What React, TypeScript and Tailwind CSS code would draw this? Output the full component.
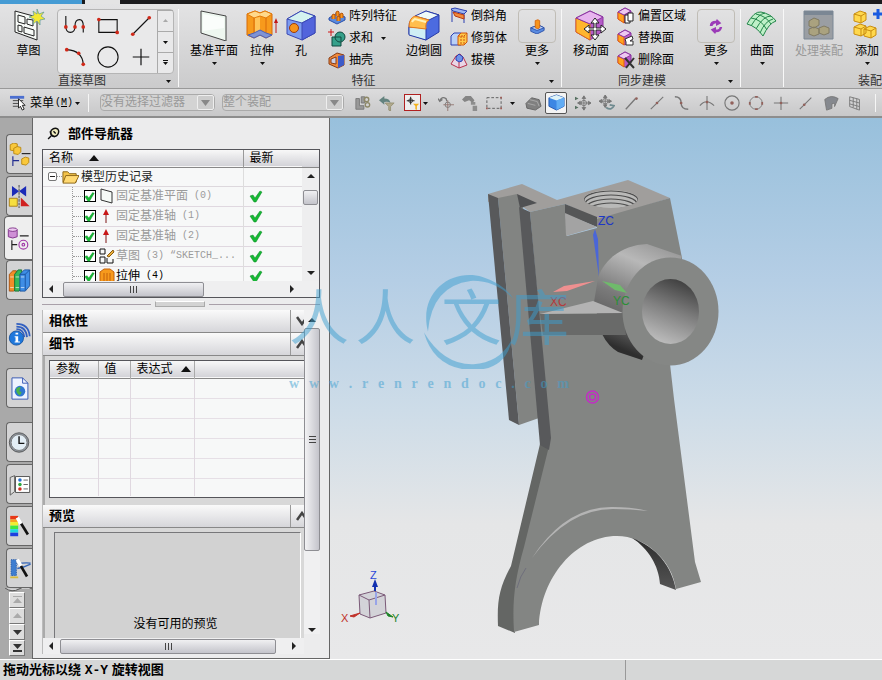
import React, { useState } from 'react'

const CJK = "font-['Liberation_Sans','Noto_Sans_CJK_SC',sans-serif]"

type IconProps = { size?: number; box?: string; className?: string; children: React.ReactNode }

const Icon = ({ size = 18, box = '0 0 18 18', className = '', children }: IconProps) => (
  <svg width={size} height={size} viewBox={box} fill="none" className={'shrink-0 ' + className} aria-hidden="true">
    {children}
  </svg>
)

const Down = ({ bar = false, dim = false }: { bar?: boolean; dim?: boolean }) => (
  <svg width="7" height="6" viewBox="0 0 7 6" className="shrink-0" aria-hidden="true">
    {bar && <path d="M1 0h5v1H1z" fill="#111" />}
    <path d="M1 2h5L3.500 5z" fill={dim ? '#aaa' : '#111'} />
  </svg>
)

/* ---------- big ribbon icons, 32 x 32 ---------- */

const SketchIcon = () => (
  <Icon size={32} box="0 0 32 32">
    <path d="M2 2l22 6v23L2 23z" fill="#f7faf7" stroke="#222" />
    <path d="M5 6l7 2v7l-7-2zM14 10l6 1v6l-6-2zM5 16l4 1v6l-4-1zM11 18l10 3v6l-10-3z" stroke="#222" />
    <path d="M24 0l2 5 5-2-3 4 4 3-5 1v5l-3-4-4 3 1-5-5-2 5-2-1-4 4 3z" fill="#f4e934" stroke="#5a9a9a" strokeWidth=".7" />
  </Icon>
)

const PlaneIcon = () => (
  <Icon size={32} box="0 0 32 32">
    <path d="M3 2l25 5v25L3 24z" fill="#eef7f0" stroke="#444" />
    <path d="M5 5l21 4v10L5 22z" fill="#fff" opacity=".7" />
  </Icon>
)

const ExtrudeIcon = () => (
  <Icon size={32} box="0 0 32 32">
    <path d="M1 5l8-3 5 2 5-2 7 3v21l-6 3-6-3-6 3-7-3z" fill="#f79a1c" stroke="#d76a08" />
    <path d="M1 5l7 4 6-2 6 2 6-4-7-3-5 2-5-2z" fill="#ffd98c" stroke="#e27b0c" />
    <path d="M8 9v16M20 9v16" stroke="#d86b0a" />
    <path d="M9 9v15l5-3V8z" fill="#ffc45a" />
    <path d="M2 26l6-2 6-3 6 3 6 2-6 3-6-3-6 3z" fill="#7f93d4" stroke="#4c60b8" />
    <path d="M30 24V13" stroke="#c01818" />
    <path d="M28 14l2-5 2 5z" fill="#c01818" />
  </Icon>
)

const HoleIcon = () => (
  <Icon size={32} box="0 0 32 32">
    <path d="M2 10L16 2l14 5v17l-13 7L2 25z" fill="#7d9cf0" stroke="#3b48b4" />
    <path d="M2 10L16 2l14 5-13 7z" fill="#d4f2f0" stroke="#3b48b4" />
    <path d="M17 14l13-7v17l-13 7z" fill="#5264dc" stroke="#3b48b4" />
    <circle cx="9" cy="19" r="4.500" fill="#f7941c" stroke="#9b3c10" />
  </Icon>
)

const BlendIcon = () => (
  <Icon size={32} box="0 0 32 32">
    <path d="M1 18q0-8 6-10l11-6 13 4v17l-13 8-17-6z" fill="#4c6be0" stroke="#263aa8" />
    <path d="M1 18l17 1v12L1 26z" fill="#cfeef5" stroke="#263aa8" />
    <path d="M7 7l11-5 13 4-10 5z" fill="#eefaf8" stroke="#263aa8" />
    <path d="M1 18q0-9 6-11l14 4q-4 2-3 9z" fill="#ffbe4d" stroke="#e77817" />
    <path d="M4 13q1-2 3-3l11 3" stroke="#fff1b8" strokeWidth="2" />
  </Icon>
)

const MoveFaceIcon = () => (
  <Icon size={32} box="0 0 32 32">
    <path d="M1 9l14-7 13 6v14l-13 9-14-8z" fill="#b55bc8" stroke="#8a33a0" />
    <path d="M1 9l14 6v16L1 23z" fill="#ffb52e" stroke="#e46a10" />
    <path d="M1 9l14-7 13 6-13 7z" fill="#e7b4ee" stroke="#8a33a0" />
    <path d="M20 9l4 5h-3v5h5v-3l5 4-5 4v-3h-5v5h3l-4 5-4-5h3v-5h-5v3l-5-4 5-4v3h5v-5h-3z" fill="#fff" stroke="#222" />
  </Icon>
)

const SurfaceIcon = () => (
  <Icon size={32} box="0 0 32 32">
    <path d="M1 15Q8 2 15 3q10 2 15 9-7 2-13 15Q10 17 1 15z" fill="#bff0c8" stroke="#23854a" />
    <path d="M5 9q10 1 16 12M10 5q10 2 15 10M5 17Q12 5 19 4M10 20Q17 7 25 7M14 24q5-12 13-14" stroke="#23854a" />
  </Icon>
)

const AsmProcessIcon = () => (
  <Icon size={32} box="0 0 32 32">
    <path d="M1 2h29v28H1z" fill="#9a9ea3" stroke="#7b8794" />
    <path d="M1 2h29v4H1z" fill="#7b8794" />
    <path d="M6 12l5-3 5 2v5l-5 3-5-2zM6 20l5-2 5 2v5l-5 2-5-2zM16 19l5-2 5 2v5l-5 2-5-2z" fill="#aaa27f" stroke="#807a63" />
  </Icon>
)

const AddIcon = () => (
  <Icon size={32} box="0 0 32 32">
    <path d="M3 5l6-3 6 2v7l-5 3-7-2zM3 18l6-3 6 2v7l-5 3-7-2zM13 20l6-3 6 2v7l-5 3-7-2z" fill="#ffd84d" stroke="#c98d10" />
    <path d="M3 5l7 2 5-3M10 7v7M3 18l7 2 5-3M10 20v7M13 20l7 2 5-3M20 22v7" stroke="#c98d10" />
    <path d="M27 0v10M22 5h10" stroke="#1a5be0" strokeWidth="3" />
  </Icon>
)

/* ---------- small ribbon icons ---------- */

const PatternIcon = () => (
  <Icon>
    <path d="M1 11l8-5 8 4v3l-8 4-8-4z" fill="#5a8be0" stroke="#2b4fa8" />
    <path d="M4 12V8l2-1 1 1v4M8 9V5l2-1 1 1v5M9 14v-4l2-1 1 1v4M12 11V7l2-1 1 1v4" fill="#f7941c" stroke="#b8560a" />
  </Icon>
)
const UniteIcon = () => (
  <Icon>
    <path d="M3 0v7M0 3h6" stroke="#d01818" />
    <path d="M4 8h9v9H4z" fill="#35a08a" stroke="#114a40" />
    <circle cx="12" cy="8" r="5" fill="#35a08a" stroke="#114a40" />
    <path d="M7 8h6v4" stroke="#114a40" />
  </Icon>
)
const ShellIcon = () => (
  <Icon>
    <path d="M1 7l8-5 7 2v10l-6 3-9-4z" fill="#f08a3c" stroke="#8a3c14" />
    <path d="M10 5l6-1v10l-6 3z" fill="#3d5bc8" />
    <path d="M3 8l5-2v7l-5-1z" fill="#c9cfe8" stroke="#8a3c14" />
  </Icon>
)
const ChamferIcon = () => (
  <Icon>
    <path d="M2 2v13M2 3l12 3v10" stroke="#2b3fb0" />
    <path d="M1 2l4-1 12 3-3 3-11-3z" fill="#9db5f0" stroke="#2b3fb0" />
    <path d="M3 5l11 3v4L5 9z" fill="#f28a3a" stroke="#b83b14" />
  </Icon>
)
const TrimIcon = () => (
  <Icon>
    <path d="M1 7l3-3h7v12H1z" fill="#b9d0f6" stroke="#2b3fb0" />
    <path d="M8 7l3-3h6v9l-3 3H8z" fill="#ffc948" stroke="#d0560c" />
    <path d="M8 7h6l3-3M14 7v9M11 7v9" stroke="#d0560c" strokeDasharray="2 1" />
  </Icon>
)
const DraftIcon = () => (
  <Icon>
    <path d="M1 13L6 5l4-2 3 3 4 8-8 3z" fill="#e9d6e6" stroke="#b8304c" />
    <path d="M6 6l3-3 4 3-1 4-3 1-3-2z" fill="#6f93e8" stroke="#2b3fb0" />
    <path d="M9 11v6" stroke="#b8304c" />
  </Icon>
)
const FaceCube = ({ children }: { children: React.ReactNode }) => (
  <Icon>
    <path d="M1 5l7-4 6 3v8l-6 4-7-4z" fill="#b55bc8" stroke="#8a33a0" />
    <path d="M1 5l6 3v8l-6-4z" fill="#ffa21f" stroke="#e4600c" />
    <path d="M1 5l7-4 6 3-7 4z" fill="#edc8f0" stroke="#8a33a0" />
    {children}
  </Icon>
)
const OffsetIcon = () => <FaceCube><path d="M8 8h3V6h5v8h-3v2H8z" fill="#fff" stroke="#222" /><path d="M11 8v6h2" stroke="#222" /></FaceCube>
const ReplaceIcon = () => <FaceCube><path d="M8 10l7-3 1 3-3 2h3v4H9v-3z" fill="#fff" stroke="#333" /></FaceCube>
const DeleteIcon = () => <FaceCube><path d="M8 7l9 10M17 7l-8 10" stroke="#333" strokeWidth="2" /></FaceCube>

/* ---------- ribbon building blocks ---------- */

const BigButton = ({ label, icon, arrow, width = 'w-[40px]', dim }: { label: string; icon: React.ReactNode; arrow?: boolean; width?: string; dim?: boolean }) => (
  <button disabled={dim} className={'flex shrink-0 flex-col items-center text-xs whitespace-nowrap ' + width + (dim ? ' text-[#999]' : ' text-black')}>
    {icon}
    <span className="mt-0.5 leading-4">{label}</span>
    {arrow && <span className="mt-px"><Down /></span>}
  </button>
)

const MoreButton = ({ children }: { children: React.ReactNode }) => (
  <button className="flex w-[38px] shrink-0 flex-col items-center text-xs whitespace-nowrap">
    <span className="flex h-[34px] w-full items-center justify-center rounded-sm border border-[#c0bdb6]">{children}</span>
    <span className="leading-4">更多</span>
    <span className="mt-px"><Down /></span>
  </button>
)

const SmallList = ({ items, className }: { items: { label: string; icon: React.ReactNode; arrow?: boolean }[]; className: string }) => (
  <div className={'-mt-1 flex shrink-0 flex-col ' + className}>
    {items.map((it) => (
      <button key={it.label} className="flex h-[22px] items-center gap-[3px] text-left text-xs leading-4 whitespace-nowrap">
        {it.icon}
        <span>{it.label}</span>
        {it.arrow && <span className="ml-1"><Down /></span>}
      </button>
    ))}
  </div>
)

const Group = ({ title, className, titleClass = 'text-center', more, children }: { title: string; className: string; titleClass?: string; more?: boolean; children: React.ReactNode }) => (
  <section className={'flex h-[78px] shrink-0 flex-col border-r border-[#f8f8f8] ' + className}>
    <div className="flex h-[66px]">{children}</div>
    <div className="flex h-[12px] items-center pr-1.5 text-xs leading-3 text-[#333]">
      <span className={'flex-1 whitespace-nowrap ' + titleClass}>{title}</span>
      {more && <Down />}
    </div>
  </section>
)

const Gallery = () => (
  <div className="ml-2 flex h-[65px] w-[117px] shrink-0 rounded-sm border border-[#b5b5b5] bg-[#e9e9ea]">
    <div className="grid flex-1 grid-cols-3 place-items-center">
      <button aria-label="轮廓"><Icon size={22} box="0 0 24 24"><path d="M2 1v11q0 7 5 7t5-7q0-7 5-7 4 0 4 7v7" stroke="#111" strokeWidth="1.200" /><circle cx="2" cy="13" r="2" fill="#d02818" /><circle cx="12" cy="13" r="2" fill="#d02818" /><circle cx="21" cy="13" r="2" fill="#d02818" /></Icon></button>
      <button aria-label="矩形"><Icon size={22} box="0 0 24 24"><path d="M2 5h20v14H2z" stroke="#111" strokeWidth="1.200" /><circle cx="2" cy="5" r="2" fill="#d02818" /><circle cx="22" cy="19" r="2" fill="#d02818" /></Icon></button>
      <button aria-label="直线"><Icon size={22} box="0 0 24 24"><path d="M3 21L21 3" stroke="#111" strokeWidth="1.200" /><circle cx="3" cy="21" r="2" fill="#d02818" /><circle cx="21" cy="3" r="2" fill="#d02818" /></Icon></button>
      <button aria-label="圆弧"><Icon size={22} box="0 0 24 24"><path d="M3 4q17 1 18 16" stroke="#111" strokeWidth="1.200" /><circle cx="3" cy="4" r="2" fill="#d02818" /><circle cx="16" cy="8" r="2" fill="#d02818" /><circle cx="21" cy="20" r="2" fill="#d02818" /></Icon></button>
      <button aria-label="圆"><Icon size={22} box="0 0 24 24"><circle cx="12" cy="12" r="11" stroke="#111" strokeWidth="1.200" /></Icon></button>
      <button aria-label="点"><Icon size={22} box="0 0 24 24"><path d="M12 3v18M3 12h18" stroke="#111" strokeWidth="1.300" /></Icon></button>
    </div>
    <div className="flex w-[16px] flex-col divide-y divide-[#aaa] border-l border-[#aaa]">
      <button aria-label="上一行" className="flex flex-1 rotate-180 items-center justify-center"><Down dim /></button>
      <button aria-label="下一行" className="flex flex-1 items-center justify-center border-t border-[#aaa]"><Down /></button>
      <button aria-label="展开" className="flex flex-1 items-center justify-center"><Down bar /></button>
    </div>
  </div>
)

const Ribbon = () => (
  <div className="flex h-[85px] shrink-0 overflow-hidden border-b border-[#999] bg-gradient-to-b from-[#e3e3e4] to-[#cbcbcc] pt-[5px]">
    <Group title="直接草图" className="w-[179px]" titleClass="pl-[58px]" more>
      <BigButton label="草图" icon={<SketchIcon />} width="ml-2 w-[41px]" />
      <Gallery />
    </Group>
    <Group title="特征" className="w-[383px]" more>
      <BigButton label="基准平面" icon={<PlaneIcon />} width="ml-[9px] w-[52px]" arrow />
      <BigButton label="拉伸" icon={<ExtrudeIcon />} width="ml-[3px] w-[38px]" arrow />
      <BigButton label="孔" icon={<HoleIcon />} width="ml-[3px] w-[34px]" />
      <SmallList className="ml-2.5 w-[76px]" items={[
        { label: '阵列特征', icon: <PatternIcon /> },
        { label: '求和', icon: <UniteIcon />, arrow: true },
        { label: '抽壳', icon: <ShellIcon /> },
      ]} />
      <BigButton label="边倒圆" icon={<BlendIcon />} />
      <SmallList className="ml-[6px] w-[59px]" items={[
        { label: '倒斜角', icon: <ChamferIcon /> },
        { label: '修剪体', icon: <TrimIcon /> },
        { label: '拔模', icon: <DraftIcon /> },
      ]} />
      <span className="w-[9px] shrink-0" />
      <MoreButton><Icon size={16}><path d="M2 11l9-3 6 3v3l-8 4-7-3z" fill="#5a8be0" stroke="#2b4fa8" /><path d="M2 11l7 3 8-3-6-3z" fill="#b8d0f6" stroke="#2b4fa8" /><path d="M7 11V3l3-1 2 1v8l-2 1z" fill="#f7941c" stroke="#d8640a" /></Icon></MoreButton>
    </Group>
    <Group title="同步建模" className="w-[179px]" titleClass="pl-[56px]" more>
      <BigButton label="移动面" icon={<MoveFaceIcon />} width="ml-2 w-[42px]" />
      <SmallList className="ml-[5px] w-[72px]" items={[
        { label: '偏置区域', icon: <OffsetIcon /> },
        { label: '替换面', icon: <ReplaceIcon /> },
        { label: '删除面', icon: <DeleteIcon /> },
      ]} />
      <span className="w-[8px] shrink-0" />
      <MoreButton><Icon size={16}><path d="M2 9q0-6 7-6l1-2 5 5-6 3v-3q-3 0-4 3zM16 10q-1 6-7 6l-1 2-5-5 6-3v3q4 0 4-3z" fill="#9b3bb8" /></Icon></MoreButton>
    </Group>
    <Group title="" className="w-[43px]"><BigButton label="曲面" icon={<SurfaceIcon />} width="w-[42px]" arrow /></Group>
    <Group title="装配" className="w-[150px]" titleClass="pl-[74px]">
      <BigButton label="处理装配" icon={<AsmProcessIcon />} width="ml-2 w-[54px]" dim />
      <BigButton label="添加" icon={<AddIcon />} width="ml-px w-[40px]" arrow />
    </Group>
  </div>
)

/* ---------- selection bar ---------- */

const FilterSelect = ({ label, className }: { label: string; className: string }) => (
  <div className={'flex h-[17px] shrink-0 items-center rounded-sm border border-[#aaa] bg-[#d3d3d3] ' + className}>
    <select aria-label={label} className="h-[15px] min-w-0 flex-1 appearance-none bg-transparent text-xs leading-[15px] text-[#999] outline-none">
      <option>{label}</option>
    </select>
    <span className="flex h-[15px] w-[17px] items-center justify-center rounded-xs border border-[#eee] bg-[#ccc]">
      <svg width="9" height="6" viewBox="0 0 9 6"><path d="M0 0h9L4.500 6z" fill="#888" /></svg>
    </span>
  </div>
)

const grey = '#777'
const barTools: { name: string; w: string; art: React.ReactNode }[] = [
  { name: '选择范围', w: 'w-[24px]', art: <><path d="M1 4h4v8h5v4H1zM7 2h4v7H7z" fill="#999" stroke={grey} /><circle cx="13" cy="5" r="2.500" stroke="#8d8868" strokeWidth="1.500" /><circle cx="14" cy="11" r="2.500" stroke="#8d8868" strokeWidth="1.500" /></> },
  { name: '重置过滤器', w: 'w-[24px]', art: <><path d="M0 6l6-5v3q6 0 7 5-3-2-7-1v3z" fill="#64837f" /><path d="M7 9h10l-4 4v5l-2-1v-4z" fill="#b0a98c" stroke="#969074" /></> },
]
const barTools2: { name: string; w: string; art: React.ReactNode }[] = [
  { name: '捕捉旋转', w: 'w-[24px]', art: <><path d="M2 7q2-6 7-3l1 3M0 4l2 3 3-2" stroke={grey} strokeWidth="1.500" /><circle cx="11" cy="11" r="3" stroke={grey} /><path d="M11 6v12M6 11h12" stroke="#91746f" /></> },
  { name: '撤销选择', w: 'w-[24px]', art: <><path d="M0 5l4-4h6l4 5-2 3-4-3-5 2z" fill="#858585" /><path d="M10 8h5v3h-5zM12 12h5v6h-5z" fill="#8d8d8d" /></> },
  { name: '矩形选择', w: 'w-[24px]', art: <><path d="M1 3h16v12H1z" stroke="#555" strokeDasharray="3 2" /><path d="M0 14h2v2H0zM16 14h2v2h-2zM16 2h2v2h-2z" fill="#a0605a" /></> },
]
const barTools3: { name: string; w: string; art: React.ReactNode }[] = [
  { name: '移动视图', w: 'w-[24px]', art: <><path d="M10 1v16M3 9h15M10 1L8 4h4zM10 17l-2-3h4zM3 9l3-2v4zM18 9l-3-2v4z" stroke={grey} fill={grey} /><circle cx="10" cy="9" r="3" stroke={grey} /><path d="M0 2l4 2-4 2zM0 12l4 2-4 2z" fill="#557060" /></> },
  { name: '旋转视图', w: 'w-[24px]', art: <><path d="M7 0v14M0 7h14M7 0L5 3h4zM0 7l3-2v4zM14 7l-3-2v4zM7 14l-2-3h4z" stroke={grey} fill={grey} /><circle cx="7" cy="7" r="3" stroke={grey} /><path d="M8 14q6 4 9-2l-5-1" stroke="#708b90" strokeWidth="2" /></> },
  { name: '端点', w: 'w-[26px]', art: <><path d="M2 16L13 4" stroke={grey} strokeWidth="1.500" /><circle cx="14" cy="4" r="1.500" fill="#92615b" /></> },
  { name: '中点', w: 'w-[24px]', art: <><path d="M2 16L16 2" stroke={grey} strokeWidth="1.200" /><circle cx="9" cy="9" r="1.500" fill="#92615b" /></> },
  { name: '控制点', w: 'w-[25px]', art: <><path d="M1 2q7 0 7 7t8 7" stroke={grey} strokeWidth="1.500" /><circle cx="8" cy="9" r="1.500" fill="#92615b" /></> },
  { name: '交点', w: 'w-[25px]', art: <><path d="M1 12q7-9 16 0M9 1v16" stroke={grey} strokeWidth="1.200" /><circle cx="9" cy="8" r="1.500" fill="#92615b" /></> },
  { name: '圆弧中心', w: 'w-[25px]', art: <><circle cx="9" cy="9" r="8" stroke={grey} strokeWidth="1.300" /><circle cx="9" cy="9" r="2" fill="#92615b" /></> },
  { name: '象限点', w: 'w-[24px]', art: <><circle cx="9" cy="9" r="7" stroke={grey} /><path d="M8 1h3v2H8zM8 15h3v2H8zM1 8h2v3H1zM15 8h2v3h-2z" fill="#92615b" /></> },
  { name: '现有点', w: 'w-[26px]', art: <><path d="M9 2v15M1 9h16" stroke={grey} strokeWidth="1.200" /><circle cx="9" cy="9" r="1.500" fill="#92615b" /></> },
  { name: '曲线上的点', w: 'w-[24px]', art: <><path d="M2 16L15 3" stroke={grey} strokeWidth="1.200" /><circle cx="7" cy="11" r="1.500" fill="#92615b" /></> },
  { name: '曲面上的点', w: 'w-[25px]', art: <path d="M2 5q7-6 15-1l-4 9q1-5-3-3v5l-6 2z" fill="#85888e" stroke={grey} /> },
  { name: '有界栅格', w: 'w-[24px]', art: <path d="M3 2l11 3v12L3 13zM7 3v11M11 4v12M3 6l11 3M3 10l11 3" stroke={grey} /> },
]

const ToolRow = ({ tools }: { tools: typeof barTools }) => (
  <>
    {tools.map((t) => (
      <button key={t.name} aria-label={t.name} className={'flex shrink-0 justify-center ' + t.w}>
        <Icon size={16}>{t.art}</Icon>
      </button>
    ))}
  </>
)

const SelectionBar = () => (
  <div className="flex h-[29px] shrink-0 items-center overflow-hidden border-b-2 border-[#8d8d8d] bg-gradient-to-b from-[#dcdcdd] to-[#c8c8c9] pl-2.5">
    <button className="flex shrink-0 items-center text-xs whitespace-nowrap">
      <Icon size={17}><path d="M0 2h15v3H0z" fill="#4c6fd0" /><path d="M3 7h11M3 10h11M3 13h11" stroke="#444" /><path d="M9 5v10l2-2 2 4 2-1-2-4h3z" fill="#fff" stroke="#222" /></Icon>
      <span className="ml-[3px]">菜单</span>
      <span className="mx-px font-['Liberation_Mono'] text-[10px]">(<u>M</u>)</span>
      <Down />
    </button>
    <span className="mx-[7px] h-[18px] w-px shrink-0 bg-[#f5f5f5]" />
    <FilterSelect label="没有选择过滤器" className="ml-1 w-[115px]" />
    <FilterSelect label="整个装配" className="mr-[7px] ml-[7px] w-[122px]" />
    <ToolRow tools={barTools} />
    <button aria-label="高亮" className="mr-px ml-[5px] flex size-[17px] shrink-0 items-center justify-center border border-[#b02020] bg-[#eee]">
      <Icon size={14}><path d="M6 1v10M1 6h10" stroke="#222" strokeWidth="1.300" /><circle cx="6" cy="6" r="2.500" stroke="#222" /><path d="M9 10h8l-3 3v5l-2-1v-4z" fill="#f3b21c" /></Icon>
    </button>
    <Down />
    <span className="w-[5px] shrink-0" />
    <ToolRow tools={barTools2} />
    <span className="mx-[3px]"><Down /></span>
    <button aria-label="实体" className="mr-[3px] ml-[6px] shrink-0"><Icon size={17}><path d="M1 10l6-6 8 2 2 7-6 4-9-2z" fill="#808080" stroke="#666" /><path d="M5 6l8 2 2 5M3 10l8 2" stroke="#aaa" /></Icon></button>
    <button aria-label="着色" className="flex size-[22px] shrink-0 items-center justify-center rounded-xs border border-[#555] bg-[#f4f4f4]">
      <Icon size={17}><path d="M1 4l8-3 8 3v9l-8 4-8-4z" fill="#3c86e4" stroke="#2458b0" /><path d="M1 4l8-3 8 3-8 3z" fill="#dff3f8" /><path d="M9 7l8-3v9l-8 4z" fill="#61acf4" /></Icon>
    </button>
    <span className="w-1 shrink-0" />
    <ToolRow tools={barTools3} />
    <span className="ml-2 h-[18px] w-px shrink-0 bg-[#f5f5f5]" />
  </div>
)

/* ---------- resource bar ---------- */

const cube = (x: number, y: number) => <path d={`M${x} ${y + 2}l4-2 4 1v5l-3 3-5-1z`} fill="#f9c83c" stroke="#b8860f" />

const tabs: { name: string; gap: string; active?: boolean; art: React.ReactNode }[] = [
  { name: '装配导航器', gap: 'mt-[16px]', art: <>{cube(2, 0)}{cube(6, 4)}{cube(15, 16)}<path d="M5 15v11M5 20h7" stroke="#222d90" strokeWidth="1.300" /><path d="M15 12h10" stroke="#222" strokeWidth="1.300" /></> },
  { name: '约束导航器', gap: 'mt-[2px]', art: <><path d="M4 1l8 6-8 6zM20 1l-8 6 8 6z" fill="#1c2bb8" /><path d="M12 0v26" stroke="#333" strokeDasharray="3 1" /><path d="M1 15h9v9H1z" fill="#f6df40" stroke="#a77c14" /><path d="M14 14v10h10z" fill="#d02020" /></> },
  { name: '部件导航器', gap: 'mt-0', active: true, art: <><path d="M1 3v8q5 3 10 0V3" fill="#cf8fd6" stroke="#7b2c86" /><ellipse cx="6" cy="3" rx="5" ry="2" fill="#ecc9ef" stroke="#7b2c86" /><path d="M14 10h10M5 15v11M5 20h6" stroke="#222" strokeWidth="1.300" /><circle cx="18" cy="20" r="5" stroke="#a03aa8" strokeWidth="1.300" /><circle cx="18" cy="20" r="1.500" stroke="#a03aa8" strokeWidth="1.300" /></> },
  { name: '重用库', gap: 'mt-0', art: <><path d="M1 6l4-4h4v20l-3 3H1z" fill="#f28c28" stroke="#a8510c" /><path d="M7 6l4-5h4v20l-3 4H7z" fill="#35b85a" stroke="#146a30" /><path d="M13 6l5-5h6v18l-5 6h-6z" fill="#3f8ee6" stroke="#17509c" /><path d="M19 6v18M13 6h6l5-5" stroke="#17509c" /><path d="M2 9h4M2 21h4M8 9h4M8 21h4M14 9h4M14 21h4" stroke="#fff" strokeOpacity=".7" /></> },
  { name: 'HD3D 工具', gap: 'mt-[14px]', art: <><path d="M9 7q8 0 9 9M9 4q11 0 12 12M9 1q14 0 15 14" stroke="#3360c0" strokeWidth="2" /><circle cx="9" cy="17" r="8" fill="#1f78dc" stroke="#1553a0" /><path d="M8 11h3v2H8zM7 15h4v6h2v1H7v-1h1v-5H7z" fill="#fff" /></> },
  { name: 'Web 浏览器', gap: 'mt-[14px]', art: <><path d="M4 1h12l6 6v18H4z" fill="#eef3ff" stroke="#2c4fb0" /><path d="M16 1v6h6" stroke="#2c4fb0" /><circle cx="13" cy="16" r="6" fill="#2f76d0" /><path d="M9 13q3-3 5-1l-2 4 3 1-2 4q-5-3-4-8z" fill="#4cb448" /></> },
  { name: '历史记录', gap: 'mt-[14px]', art: <><circle cx="12" cy="13" r="11" fill="#8b939d" stroke="#555" /><circle cx="12" cy="13" r="9" fill="#e3eef6" stroke="#777" /><path d="M12 6v8h6" stroke="#111" strokeWidth="1.600" /></> },
  { name: '系统材料', gap: 'mt-[2px]', art: <><path d="M2 5l5-2v18l-5 4z" fill="#ddd" stroke="#555" /><path d="M8 4h16v18H8z" fill="#fff" stroke="#444" /><circle cx="13" cy="8" r="2" fill="#2970d0" /><circle cx="13" cy="13" r="2" fill="#30a840" /><circle cx="13" cy="18" r="2" fill="#d03020" /><path d="M17 8h5M17 13h5M17 18h5" stroke="#555" /></> },
  { name: '角色', gap: 'mt-[2px]', art: <><path d="M2 1h9v4H2z" fill="#e83818" /><path d="M2 5h9v3H2z" fill="#f8a020" /><path d="M2 8h9v4H2z" fill="#f0ee30" /><path d="M2 12h9v4H2z" fill="#40e840" /><path d="M2 16h9v4H2z" fill="#20d8e0" /><path d="M2 20h9v4H2z" fill="#1e40e0" /><path d="M14 9l8 13" stroke="#111" strokeWidth="3" /><path d="M10 3l4 7" stroke="#fff" strokeWidth="4" /></> },
  { name: '系统场景', gap: 'mt-[2px]', art: <><path d="M3 3h6v18H3z" fill="#3f7ed0" stroke="#1c50a0" strokeDasharray="1 1" /><path d="M10 8q8-2 15-1M10 13q7-1 15-5" stroke="#3667b8" strokeWidth="1.500" /><path d="M14 10l7 12" stroke="#111" strokeWidth="3" /><path d="M10 3l4 7" stroke="#fff" strokeWidth="4" /><path d="M2 23h9" stroke="#d8bc40" strokeWidth="2" /></> },
]

const ResourceBar = () => (
  <nav className="flex w-[33px] shrink-0 flex-col items-end overflow-hidden border-r border-[#666] bg-[#a9a9a9]">
    {tabs.map((t) => (
      <button key={t.name} aria-label={t.name} className={'flex shrink-0 items-center justify-center rounded-l-sm border border-r-0 border-[#666] ' + t.gap + (t.active ? ' h-[44px] w-[28px] bg-[#eee]' : ' h-[40px] w-[26px] bg-[#d3d3d4]')}>
        <Icon size={23} box="0 0 25 26">{t.art}</Icon>
      </button>
    ))}
    <svg width="27" height="4" viewBox="0 0 27 4" className="shrink-0"><path d="M0 0q7 5 14 1t13 0" fill="#d3d3d4" stroke="#555" /></svg>
    {['顶部', '上移', '下移', '底部'].map((n, i) => (
      <button key={n} aria-label={n} className="mr-[7px] flex size-[16px] shrink-0 items-center justify-center border border-t-white border-r-[#777] border-b-[#777] border-l-white bg-[#ddd]">
        <svg width="9" height="8" viewBox="0 0 9 8">
          {i === 0 && <path d="M0 0h9v1H0zM0 7h9L4.500 2z" fill="#aaa" />}
          {i === 1 && <path d="M0 6h9L4.500 1z" fill="#aaa" />}
          {i === 2 && <path d="M0 2h9L4.500 7z" fill="#333" />}
          {i === 3 && <path d="M0 0h9L4.500 5zM0 6h9v2H0z" fill="#333" />}
        </svg>
      </button>
    ))}
  </nav>
)

/* ---------- part navigator ---------- */

const Arrow = ({ turn = '' }: { turn?: string }) => (
  <svg width="8" height="8" viewBox="0 0 8 8" className={'shrink-0 ' + turn}><path d="M0 6h8L4 2z" fill="#222" /></svg>
)

const HScroll = ({ thumb, tail }: { thumb: string; tail: string }) => (
  <div className={'flex h-[16px] shrink-0 items-center bg-[#efeff0] pl-1 ' + tail}>
    <Arrow turn="-rotate-90" />
    <div className={'flex h-[15px] items-center justify-center gap-0.5 rounded-xs border border-[#8e8e93] bg-gradient-to-b from-[#f0f0f2] to-[#c4c4cb] ' + thumb}>
      <i className="h-[7px] w-px bg-[#444]" /><i className="h-[7px] w-px bg-[#444]" /><i className="h-[7px] w-px bg-[#444]" />
    </div>
    <span className="flex-1" />
    <Arrow turn="rotate-90" />
  </div>
)

const Tick = ({ size = 14 }: { size?: number }) => (
  <Icon size={size} box="0 0 14 14"><path d="M1 7l3-1 2 3 5-7 2 1-6 10H5z" fill="#16b834" stroke="#0d8a26" strokeWidth=".5" /></Icon>
)

const history = [
  { label: '固定基准平面', no: '(0)', kind: 'plane' },
  { label: '固定基准轴', no: '(1)', kind: 'axis' },
  { label: '固定基准轴', no: '(2)', kind: 'axis' },
  { label: '草图', no: '(3) “SKETCH_...', kind: 'sketch' },
  { label: '拉伸', no: '(4)', kind: 'extrude', on: true },
]

const KindIcon = ({ kind }: { kind: string }) => (
  <Icon size={16} box="0 0 16 16">
    {kind === 'plane' && <path d="M2 1l11 3v11L2 12z" fill="#f6fbf7" stroke="#333" />}
    {kind === 'axis' && <><path d="M7 5v10" stroke="#7c1414" /><path d="M4 7l3-6 3 6z" fill="#c81818" /></>}
    {kind === 'sketch' && <><path d="M1 1h5v5H1zM1 9h5v6H1zM8 10v5h6v-4" stroke="#111" /><path d="M8 8l6-6 1 2-5 5z" fill="#e9b03a" stroke="#8a5a10" /></>}
    {kind === 'extrude' && <path d="M1 4l4-3h6l4 3v12H1zM5 5v11M8 5v11M11 5v11" fill="#f79a1c" stroke="#c4600a" />}
  </Icon>
)

const Tree = () => {
  const [checked, setChecked] = useState(history.map(() => true))
  const toggle = (i: number) => setChecked(checked.map((c, n) => (n === i ? !c : c)))
  return (
    <div className="mx-[9px] flex h-[149px] shrink-0 flex-col border border-[#55555a] bg-[#f7f8f8]">
      <div className="flex h-[131px] overflow-hidden">
        <table className="w-full table-fixed border-collapse self-start text-xs">
          <thead>
            <tr className="h-[17px] border-b border-[#888] bg-gradient-to-b from-[#f8f8f8] to-[#d3d3d8] leading-4">
              <th className="w-[200px] border-r border-[#999] p-0 pl-1.5 text-left font-normal">
                <span className="flex items-center gap-4">名称 <svg width="10" height="6" viewBox="0 0 10 6"><path d="M0 6h10L5 0z" fill="#111" /></svg></span>
              </th>
              <th className="p-0 pl-1.5 text-left font-normal">最新</th>
            </tr>
          </thead>
          <tbody>
            <tr className="h-[19px] border-b border-[#ddd8dd]">
              <td className="border-r border-[#ddd] p-0">
                <span className="flex items-center pl-[5px] leading-[18px] text-[#222]">
                  <button aria-label="折叠" className="flex size-[9px] items-center justify-center rounded-xs border border-[#777] bg-white"><i className="h-px w-[5px] bg-[#222]" /></button>
                  <i className="w-[5px] border-t border-dotted border-[#999]" />
                  <Icon size={17}><path d="M1 4h5l2 2h7v9H1z" fill="#f3c34a" stroke="#8a6414" /><path d="M4 8h14l-4 8H1z" fill="#ffd972" stroke="#8a6414" /></Icon>
                  <span className="ml-0.5">模型历史记录</span>
                </span>
              </td>
              <td />
            </tr>
            {history.map((h, i) => (
              <tr key={i} className="h-5 border-b border-[#e0d8e0]">
                <td className="border-r border-[#ddd] p-0">
                  <label className={'flex h-[19px] items-center whitespace-nowrap ' + (h.on ? 'text-black' : 'text-[#9b9b9b]')}>
                    <i className="ml-[29px] flex h-full w-[11px] items-center border-l border-dotted border-[#999]"><i className="w-full border-t border-dotted border-[#999]" /></i>
                    <span className="grid size-[13px] place-items-center">
                      <input type="checkbox" checked={checked[i]} onChange={() => toggle(i)} className="col-start-1 row-start-1 size-[12px] appearance-none border border-black bg-white" />
                      {checked[i] && <span className="pointer-events-none col-start-1 row-start-1"><Tick size={11} /></span>}
                    </span>
                    <span className="ml-[3px]"><KindIcon kind={h.kind} /></span>
                    <span className="ml-px">{h.label}</span>
                    <span className="ml-1.5 font-['Liberation_Mono'] text-[10px]">{h.no}</span>
                  </label>
                </td>
                <td className="p-0 pl-[5px]"><Tick /></td>
              </tr>
            ))}
          </tbody>
        </table>
        <div className="flex w-[17px] shrink-0 flex-col items-center bg-[#eeeeef]">
          <i className="h-[18px] w-full shrink-0 border-b border-[#888] bg-gradient-to-b from-[#f8f8f8] to-[#d3d3d8]" />
          <span className="mt-1"><Arrow /></span>
          <span className="mt-2.5 h-[15px] w-[15px] shrink-0 rounded-xs border border-[#8e8e93] bg-gradient-to-b from-[#f0f0f2] to-[#c4c4cb]" />
          <span className="flex-1" />
          <Arrow turn="mb-1 rotate-180" />
        </div>
      </div>
      <HScroll thumb="ml-2 w-[141px]" tail="pr-[23px]" />
    </div>
  )
}

const SectionHead = ({ title, open }: { title: string; open?: boolean }) => (
  <button className="flex h-[23px] w-full shrink-0 items-center border-b border-[#888] bg-gradient-to-b from-[#fafafa] to-[#d6d6da] pl-1.5 text-left text-[13px] font-bold">
    <span className="flex-1">{title}</span>
    <span className="flex h-full w-[14px] items-center justify-end overflow-hidden border-l border-[#999]">
      <svg width="8" height="10" viewBox="0 0 8 10" fill="none"><path d={open ? 'M1 9l5-7 5 7' : 'M1 1l5 7 5-7'} stroke="#444" strokeWidth="2.500" /></svg>
    </span>
  </button>
)

const Navigator = () => (
  <aside className="flex w-[297px] shrink-0 flex-col border-r border-b border-[#666] bg-[#ececed]">
    <h2 className="flex h-[31px] shrink-0 items-center gap-2 pl-[14px] text-[13px] font-bold">
      <Icon size={13} box="0 0 12 12"><path d="M4 3q3-3 6-1 2 3-1 6-3 2-5-1-1-2 0-4z" fill="#f2eec0" stroke="#111" strokeWidth="1.300" /><path d="M6 4l2 2M3 4q0 4 4 5M1 11l3-3" stroke="#111" strokeWidth="1.300" /></Icon>
      部件导航器
    </h2>
    <Tree />
    <div className="mx-[9px] flex h-[12px] shrink-0 items-center gap-1">
      <i className="w-[109px] border-t border-[#a9a0a9]" />
      <i className="h-[6px] w-[50px] border border-[#aaa] border-t-white bg-[#d3d3d3]" />
      <i className="flex-1 border-t border-[#a9a0a9]" />
    </div>
    <div className="mx-[9px] flex min-h-0 flex-1">
      <div className="flex min-w-0 flex-1 flex-col overflow-hidden border-l border-[#bbb]">
        <SectionHead title="相依性" />
        <SectionHead title="细节" open />
        <div className="h-[149px] shrink-0 border-l-2 border-[#aaa] bg-[#d8d8d8] pt-1 pl-1">
          <div className="h-[138px] border border-r-0 border-[#55555a] bg-[#f7f8f8]">
            <table className="w-full table-fixed border-collapse text-xs">
              <thead>
                <tr className="h-[17px] border-b border-[#888] bg-gradient-to-b from-[#f8f8f8] to-[#d3d3d8] leading-4">
                  <th className="w-[48px] border-r border-[#aaa] p-0 pl-1.5 text-left font-normal">参数</th>
                  <th className="w-[32px] border-r border-[#aaa] p-0 pl-1.5 text-left font-normal">值</th>
                  <th className="w-[64px] border-r border-[#aaa] p-0 pl-1.5 text-left font-normal whitespace-nowrap">
                    <span className="flex items-center gap-2">表达式 <svg width="10" height="6" viewBox="0 0 10 6"><path d="M0 6h10L5 0z" fill="#111" /></svg></span>
                  </th>
                  <th />
                </tr>
              </thead>
              <tbody>
                {[0, 1, 2, 3, 4].map((r) => (
                  <tr key={r} className="h-5 border-b border-[#e6dfe6]">
                    <td className="border-r border-[#e0d8e0]" /><td className="border-r border-[#e0d8e0]" /><td className="border-r border-[#e0d8e0]" /><td />
                  </tr>
                ))}
                <tr className="h-[18px]">
                  <td className="border-r border-[#e0d8e0]" /><td className="border-r border-[#e0d8e0]" /><td className="border-r border-[#e0d8e0]" /><td />
                </tr>
              </tbody>
            </table>
          </div>
        </div>
        <SectionHead title="预览" open />
        <div className="flex min-h-0 flex-1 flex-col border-l-2 border-[#aaa] bg-[#d8d8d8] pt-1 pr-[3px] pl-[9px]">
          <div className="flex flex-1 items-end justify-center border border-r-white border-b-0 border-[#77777a] bg-[#d2d2d2] pr-1 pb-1.5 text-xs">没有可用的预览</div>
        </div>
        <HScroll thumb="ml-[5px] w-[216px]" tail="pr-[6px]" />
      </div>
      <div className="mb-[20px] flex w-[16px] shrink-0 flex-col items-center bg-[#f0f0f1] pt-1.5">
        <Arrow />
        <div className="mt-1 flex h-[223px] w-full flex-col items-center justify-center gap-0.5 rounded-xs border border-[#8e8e93] bg-gradient-to-r from-[#f2f2f4] to-[#c4c4cb]">
          <i className="h-px w-[7px] bg-[#444]" /><i className="h-px w-[7px] bg-[#444]" /><i className="h-px w-[7px] bg-[#444]" />
        </div>
        <span className="flex-1" />
        <Arrow turn="rotate-180" />
      </div>
    </div>
    <div className="h-1 shrink-0" />
  </aside>
)

/* ---------- model view ---------- */

const Model = () => (
  <svg viewBox="330 118 552 541" preserveAspectRatio="xMinYMin meet" className="absolute inset-0 h-full w-full" role="img" aria-label="支架模型">
    <defs>
      <linearGradient id="tube" x1="655" y1="245" x2="612" y2="345" gradientUnits="userSpaceOnUse">
        <stop offset="0" stopColor="#9c9c9c" /><stop offset=".2" stopColor="#b8b8b8" /><stop offset=".55" stopColor="#7a7a7a" /><stop offset=".8" stopColor="#606060" /><stop offset="1" stopColor="#2e2e2e" />
      </linearGradient>
      <linearGradient id="bore" x1="685" y1="280" x2="660" y2="342" gradientUnits="userSpaceOnUse">
        <stop offset="0" stopColor="#3c3c3c" /><stop offset=".5" stopColor="#808080" /><stop offset="1" stopColor="#bcbcbc" />
      </linearGradient>
      <linearGradient id="foot" x1="0" y1="538" x2="0" y2="590" gradientUnits="userSpaceOnUse">
        <stop offset="0" stopColor="#2c2c2c" /><stop offset="1" stopColor="#555" />
      </linearGradient>
    </defs>
    <path d="M488 194L522 184l35 16 71-20 42 18-70 22-35-16-35 8-13-9-19-4-10 3z" fill="#a09e9c" />
    <path d="M498 198l19-4 6 12 16 212-20 7z" fill="#828482" />
    <path d="M488 194l10 4 21 227-10-5z" fill="#58595b" />
    <path d="M517 194l20 9-17 5z" fill="#505153" />
    <path d="M540 444l10-5 1 8-26 101c-9 32-12 53-10 85l-17-7c-1-25 1-38 13-60z" fill="#646664" />
    <path d="M530 212l35-8 2 32 30-8v-9l73-21 12 60-12 106 4 35 21 163 6 20-25 7C672 560 645 536 617 536c-42 0-76 42-78 89l-25 7c-2-32 1-53 10-85l26-105z" fill="#838583" />
    <path d="M519 207l11 5 21 226-2 12-9-5z" fill="#58595b" />
    <path d="M632 538c25 9 40 29 44 52l-16-6c-1-18-12-36-28-46z" fill="url(#foot)" />
    <path d="M532 558q34-52 81-51 20 0 35 4-18-2-35-2-45 0-81 49z" fill="#b4b4b4" />
    <path d="M517 588q3-12 9-20" stroke="#6f6f7c" fill="none" />
    <path d="M565 204l32 13v10l-32-13z" fill="#555657" />
    <path d="M565 213l32 14-31 9z" fill="#a3a3a3" />
    <clipPath id="thread"><ellipse cx="611" cy="199" rx="27" ry="9" /></clipPath>
    <ellipse cx="611" cy="199" rx="27" ry="9" fill="#b9b9b8" />
    <g clipPath="url(#thread)" fill="none" stroke="#4d4d4d" strokeWidth="1.200">
      <ellipse cx="611" cy="200" rx="27" ry="9" /><ellipse cx="611" cy="204" rx="26" ry="9" /><ellipse cx="611" cy="208" rx="25" ry="9" /><ellipse cx="611" cy="212" rx="24" ry="9" />
    </g>
    <path d="M682 256l-35-12c-24 1-43 15-49 34l-4 24 8 32q6 12 16 18l24 8z" fill="url(#tube)" />
    <path d="M540 314l53-13 30 12z" fill="#b3b3b3" />
    <path d="M540 314h83l3 21h-83z" fill="#696a69" />
    <ellipse cx="670.500" cy="311.500" rx="48" ry="54" fill="#858785" />
    <ellipse cx="670.500" cy="311.500" rx="28.500" ry="32.500" fill="url(#bore)" />
    <path d="M599 277l-6-42 2-6 3 10z" fill="#4a66d8" />
    <path d="M595 281l-31 5-11 6 14-1z" fill="#ee9090" />
    <path d="M602 281l18 4 7 8-12-3z" fill="#6fba6b" />
    <g fontFamily="Liberation Sans, sans-serif" fontSize="12">
      <text x="598" y="225" fill="#1c36c8">ZC</text>
      <text x="550" y="306" fill="#b43a3c">XC</text>
      <text x="613" y="305" fill="#2b8f36">YC</text>
    </g>
    <g fill="none" stroke="#c32cc6" strokeWidth="1.500"><circle cx="592.500" cy="397" r="6" /><circle cx="592.500" cy="397" r="3" /></g>

    <g>
      <path d="M359 595l15-4 11 4 1 18-16 5-10-4z" fill="#d3d3d8" stroke="#7b5a78" />
      <path d="M359 595l10 5 16-5M369 600l1 18" stroke="#7b5a78" fill="none" />
      <path d="M376 592v13" stroke="#98a4e8" strokeWidth="2" />
      <path d="M375 591v-6" stroke="#1230b0" strokeWidth="2" /><path d="M372 587l3-8 3 8z" fill="#1230b0" />
      <path d="M360 613l-10 3 4 1z" stroke="#c03028" fill="#c03028" />
      <path d="M386 612l7 5-5-1z" stroke="#1d8428" fill="#1d8428" />
      <g fontFamily="Liberation Sans, sans-serif" fontSize="11">
        <text x="370" y="579" fill="#2b48d8">Z</text>
        <text x="341" y="622" fill="#c03028">X</text>
        <text x="392" y="622" fill="#1d8428">Y</text>
      </g>
    </g>
  </svg>
)

const Watermark = () => (
  <div className="pointer-events-none absolute top-[146px] left-[289px] w-[280px] text-[#3d9fd0] opacity-50">
    <div className="flex h-[112px] items-center text-[60px] leading-none">
      <span className="w-[67px]">人</span>
      <span className="w-[67px]">人</span>
      <span className="relative flex size-[100px] items-center justify-center">
        <svg viewBox="0 0 100 100" className="absolute inset-0" fill="currentColor" aria-hidden="true">
          <path d="M6 62C-4 22 30-2 61 7q22 7 31 22Q74 10 49 11 10 16 6 62zM2 63q20 33 50 32 28-2 39-26-6 32-41 32Q12 99 2 63z" />
        </svg>
        文
      </span>
      <span className="-ml-3">库</span>
    </div>
    <div className="flex justify-between font-['Liberation_Serif',serif] text-sm leading-4 font-bold">
      {'www.renrendoc.com'.split('').map((c, i) => <span key={i}>{c}</span>)}
    </div>
  </div>
)

const App = () => {
  return (
    <div className={'flex h-screen flex-col overflow-hidden bg-[#d6d6d6] text-black ' + CJK}>
      <div className="flex h-1 shrink-0 bg-[#1b1b1d]">
        <i className="w-[82px] bg-[#459bd4]" />
        <i className="ml-[3px] w-[35px] bg-[#e4e4e4]" />
      </div>
      <Ribbon />
      <SelectionBar />
      <main className="relative flex min-h-0 flex-1">
        <ResourceBar />
        <Navigator />
        <div className="relative min-w-0 flex-1 bg-[linear-gradient(to_bottom,#98c0dc_0%,#b5cee5_30%,#cddce8_54%,#e5e6e7_75%,#e8e8e9_100%)]">
          <Model />
        </div>
        <Watermark />
      </main>
      <footer className="flex h-[21px] shrink-0 items-center border-t border-white bg-[#d6d7d7] text-[13px] font-bold">
        <span className="w-[625px] pl-[3px]">拖动光标以绕 <span className="font-['Liberation_Mono']">X-Y</span> 旋转视图</span>
        <i className="h-full w-px border-l border-[#999] bg-white" />
      </footer>
    </div>
  )
}

export default App
